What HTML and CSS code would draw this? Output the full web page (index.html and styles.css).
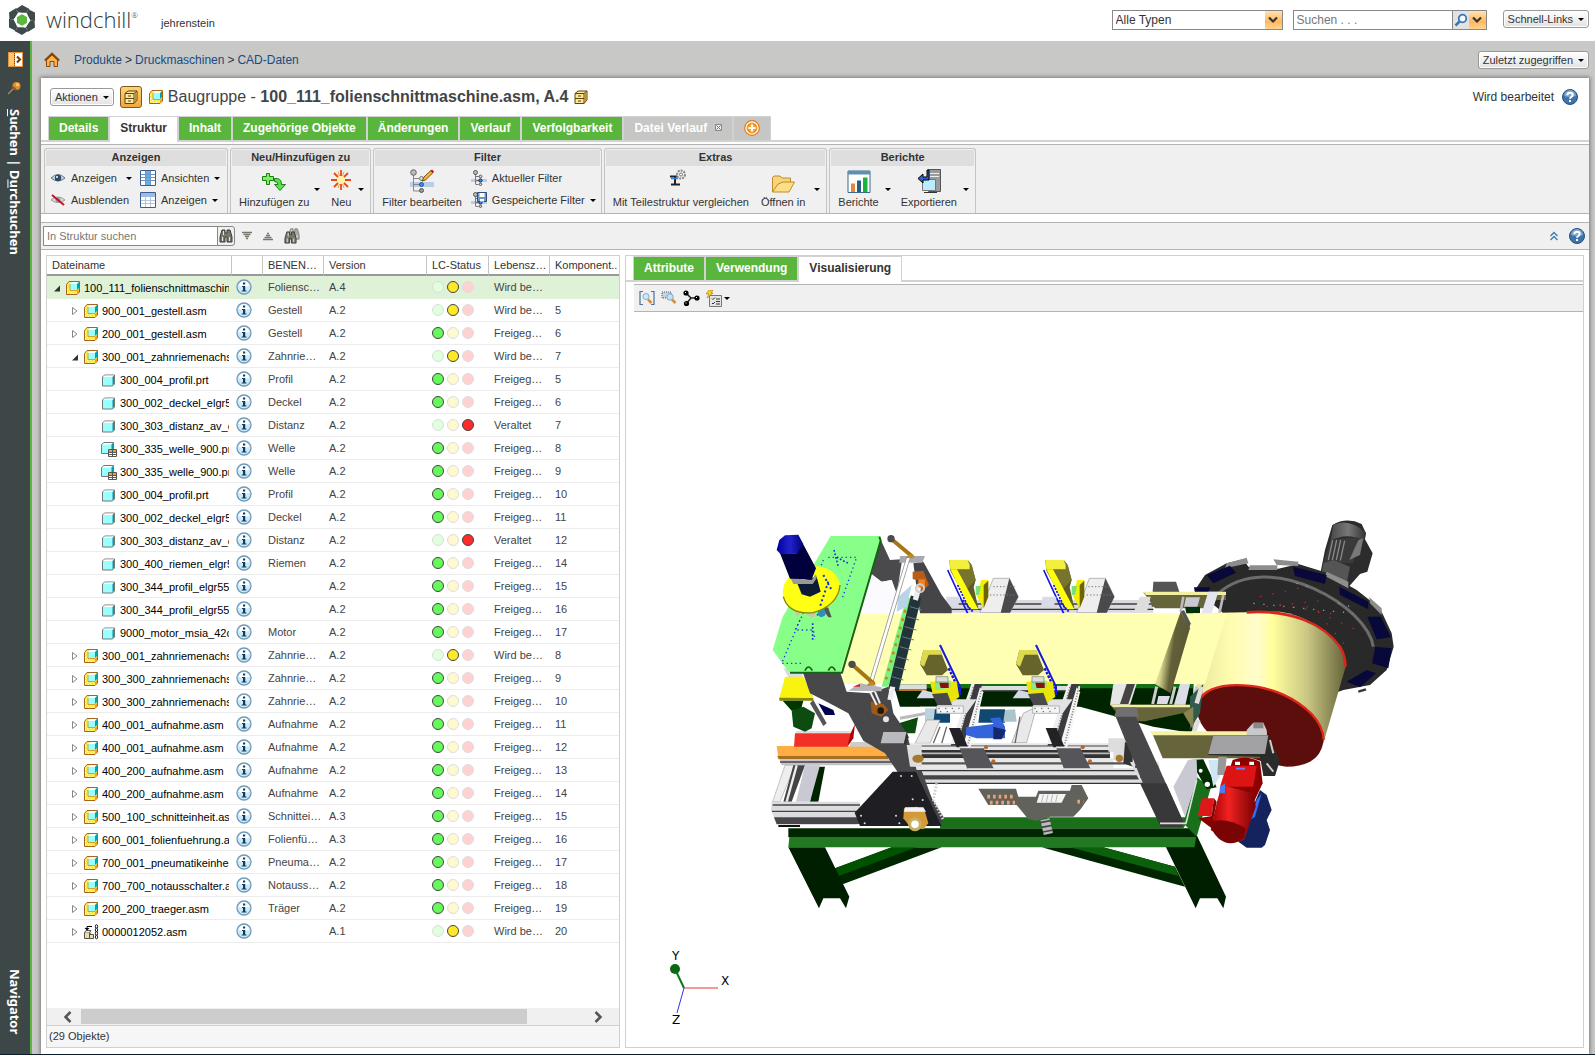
FILE: index.html
```html
<!DOCTYPE html>
<html lang="de">
<head>
    <meta charset="UTF-8">
    <title>Windchill</title>
    <link rel="stylesheet" href="styles.css">
</head>
<body>
<!-- icons -->
<svg class="sprite" aria-hidden="true">
    <symbol id="i-asm" viewBox="0 0 16 16">
        <path d="M1.500 4.500 4 1.500h10.500v10.500l-2.500 2.500H1.500z" fill="#ffe94d" stroke="#a8641c"/>
        <path d="M2 6h1v1H2zM2 9h1v1H2zM2 12h1v1H2zM5 13h1v1H5zM8 13h1v1H8zM4 11h1v1H4z" fill="#fff"/>
        <path d="M12 14v-3l2-2v3z" fill="#f0a01e"/>
        <path d="M5 4 7 2h7l-2 2z" fill="#fff"/>
        <path d="M5 4h7v6H5z" fill="#9ff"/>
        <path d="M12 4l2-2v6l-2 2z" fill="#00a5b5"/>
        <path d="M5 4v6.500h7" fill="none" stroke="#b98a1a" stroke-width=".7"/>
    </symbol>
    <symbol id="i-prt" viewBox="0 0 16 16">
        <path d="M1.500 5 3.500 3h10v9l-2 2h-10z" fill="#9ff" stroke="#777"/>
        <path d="M2 5 4 3.500H13L11.500 5z" fill="#fff"/>
        <path d="M11.500 5 13 3.500V12l-1.500 1.500z" fill="#009aa8"/>
    </symbol>
    <symbol id="i-fam" viewBox="0 0 16 16">
        <path d="M.5 3.500 3 1.500h9.500v9l-2 2H.5z" fill="#9ff" stroke="#777"/>
        <path d="M1 3.500 3.500 2H12l-1.500 1.500z" fill="#fff"/>
        <path d="M10.500 3.500 12 2v7l-1.500 2z" fill="#009aa8"/>
        <path d="M7.500 8.500h8v7h-8z" fill="#fff" stroke="#555"/>
        <path d="M8 9h7v2H8z" fill="#f5a020"/>
        <path d="M8 11.500h7M8 13.500h7M11.500 9v6" stroke="#555" fill="none"/>
    </symbol>
    <symbol id="i-bulk" viewBox="0 0 16 16">
        <path d="M1.500 8.500h5v6h-5zM6.500 10.500h4v4h-4z" fill="#e9dfa0" stroke="#555"/>
        <path d="M1.500 8.500 3 6.500h5l-1.500 2M6.500 10.500 8 8.500" fill="#fff8cc" stroke="#555"/>
        <path d="M4 5V2.500h5" fill="none" stroke="#000"/>
        <path d="M1.500 4h5L4 6.500z" fill="#000"/>
        <g fill="#fff" stroke="#000" stroke-width=".9"><ellipse cx="13.500" cy="2.500" rx="1.200" ry="1.800"/><ellipse cx="13.500" cy="6" rx="1.200" ry="1.800"/><ellipse cx="13.500" cy="9.500" rx="1.200" ry="1.800"/><ellipse cx="13.500" cy="13" rx="1.200" ry="1.800"/></g>
    </symbol>
    <symbol id="i-info" viewBox="0 0 16 16">
        <circle cx="8" cy="8" r="7" fill="#cdeaf8" stroke="#6f9ab8" stroke-width="1.300"/>
        <path d="M3 7a5 5 0 0 1 10 0q-5 1-10 0z" fill="#fff"/>
        <path d="M7 3.500h2.200v2H7zM6 7h3.200v4.500H10.500v1H5.700v-1H7V8H6z" fill="#123c5c"/>
    </symbol>
    <symbol id="i-help" viewBox="0 0 16 16">
        <circle cx="8" cy="8" r="7.500" fill="#3f74a8" stroke="#27507c"/>
        <path d="M2 7a6 6 0 0 1 12 0q-6 2-12 0z" fill="#7ba6cd"/>
        <path d="M5.300 6.200C5.300 2.800 10.700 3 10.700 6 10.700 8 8 8 8 9.700M8 11v2" fill="none" stroke="#fff" stroke-width="2"/>
    </symbol>
    <symbol id="i-cabinet" viewBox="0 0 14 14">
        <path d="M1 3.500 4 1h9v9l-3 3.500H1z" fill="#fbe69a" stroke="#5d4510"/>
        <path d="M1 3.500h9v10M10 3.500 13 1" fill="none" stroke="#5d4510"/>
        <path d="M10.500 4 12.500 2v8l-2 2.500z" fill="#c48b2e"/>
        <path d="M1 8.500h9M4 6h3M4 11h3" stroke="#5d4510" fill="none"/>
    </symbol>
    <symbol id="i-bino" viewBox="0 0 14 14">
        <path d="M3 1h3v3h2V1h3l2 7v5H8V8H6v5H1V8z" fill="#77796f" stroke="#3a3b34"/>
        <path d="M3 8h1v4H3zM10 8h1v4h-1zM4 2h1v4H4z" fill="#e6e8dc"/>
    </symbol>
    <symbol id="i-tree" viewBox="0 0 16 16">
        <path d="M0 9h16v3H0z" fill="#b9cde6"/>
        <path d="M4.500 4v10M4.500 6.500h4M4.500 10.500h4M4.500 14.500h3" stroke="#777" fill="none"/>
        <circle cx="4.500" cy="2.500" r="2" fill="#bbb" stroke="#555"/>
        <circle cx="9.500" cy="6.500" r="1.400" fill="#ddd" stroke="#555"/>
        <circle cx="9.500" cy="10.500" r="1.600" fill="#3b8bff" stroke="#124"/>
        <circle cx="9.500" cy="14.300" r="1.200" fill="#ddd" stroke="#555"/>
    </symbol>
    <symbol id="i-chev" viewBox="0 0 10 8">
        <path d="M1 1.500 5 5.500 9 1.500" fill="none" stroke="#333" stroke-width="2.200"/>
    </symbol>
    <symbol id="i-yellowmotor" viewBox="0 0 130 170" overflow="visible">
        <path d="M0 30 60 160" stroke="#1616e0" stroke-width="5" fill="none"/>
        <path d="M5 0H60L72 15 84 60 78 82 92 145H70L8 32z" fill="#5f5c24"/>
        <path d="M60 0 72 15 84 60 55 90 28 28H66z" fill="#77742e"/>
        <path d="M5 0H60L66 14V28H8z" fill="#f3ef3c"/>
        <path d="M8 28H28L92 148H66z" fill="#ffff10"/>
        <path d="M100 60H122V72L108 145 88 110z" fill="#f4f000"/>
        <path d="M108 75 122 62V110L108 145z" fill="#6a6600"/>
        <path d="M84 78H100L94 105H84z" fill="#7be07b"/>
        <path d="M30 75 66 150M45 120 75 155" stroke="#1616e0" stroke-width="5" stroke-dasharray="6 4" fill="none"/>
    </symbol>
    <symbol id="i-lowmotor" viewBox="0 0 130 200" overflow="visible">
        <path d="M8 120 -10 145H50V130z" fill="#d5d8e4"/>
        <path d="M50 168 75 148H170L140 190H50z" fill="#e2e2e2"/>
        <path d="M50 168H130V190H50z" fill="#f4f4f4" stroke="#999" stroke-width="2"/>
        <path d="M55 175H125M60 185H120" stroke="#555" stroke-width="3" stroke-dasharray="4 16"/>
        <path d="M60-15 120 110V135" fill="none" stroke="#1616e0" stroke-width="6"/>
        <path d="M86 55 116 118 100 140" fill="none" stroke="#1616e0" stroke-width="7" stroke-dasharray="8 4"/>
        <path d="M10 0H60L84 60 66 76H20L0 42z" fill="#66642a"/>
        <path d="M10 0H60L66 14H26L12 50 0 42z" fill="#dcd94e"/>
        <path d="M30 95H110L118 140 85 165 40 140z" fill="#e9e50a"/>
        <path d="M36 132 82 128 96 165H52z" fill="#4a4a4e"/>
        <path d="M45 92H92V112L60 120H45z" fill="#8be88b"/>
        <path d="M58 98H86V114H62z" fill="#8c1010"/>
        <path d="M48 80H84V96H48z" fill="#ddd" stroke="#777" stroke-width="2"/>
    </symbol>
    <symbol id="i-carriage" viewBox="0 0 150 230" overflow="visible">
        <path d="M70 0H95L40 185H0z" fill="#3c3c40"/>
        <path d="M62 0H72L20 180H0z" fill="#eee"/>
        <path d="M88 10 98 25 60 190H36z" fill="#f5f5f5"/>
        <path d="M92 20 50 190M68 10 18 180" stroke="#777" stroke-width="5" stroke-dasharray="3 5" fill="none"/>
        <path d="M-5 132H28L52 190H18z" fill="#222226"/>
        <path d="M26 190H98L130 255H50z" fill="#56565a"/>
        <path d="M26 190H100M50 255H130" stroke="#e6e6e6" stroke-width="5"/>
        <circle cx="106" cy="190" r="6" fill="#b8682a"/>
        <circle cx="128" cy="232" r="6" fill="#b8682a"/>
    </symbol>
</svg>

<header class="top">
    <svg class="logo" viewBox="0 0 26 30" aria-hidden="true">
        <g fill="#3f4b4b">
            <path id="blade" d="M13 0 20.500 4 18.500 7.800H8.500L6.800 4.200z"/>
            <use href="#blade" transform="rotate(60 13 15)"/>
            <use href="#blade" transform="rotate(120 13 15)"/>
            <use href="#blade" transform="rotate(180 13 15)"/>
            <use href="#blade" transform="rotate(240 13 15)"/>
            <use href="#blade" transform="rotate(300 13 15)"/>
        </g>
        <g fill="#fff">
            <path id="slit" d="M6 3.500 10.500 9 13.500 8.300 9.500 7.300z"/>
            <use href="#slit" transform="rotate(60 13 15)"/>
            <use href="#slit" transform="rotate(120 13 15)"/>
            <use href="#slit" transform="rotate(180 13 15)"/>
            <use href="#slit" transform="rotate(240 13 15)"/>
            <use href="#slit" transform="rotate(300 13 15)"/>
        </g>
        <path d="M13 8.500 18.600 11.800V18.200L13 21.500 7.400 18.200V11.800z" fill="#5ab93c" stroke="#fff" stroke-width="1.200"/>
    </svg>
    <span class="brand">windchill<sup>®</sup></span>
    <span class="user">jehrenstein</span>
    <div class="top-tools">
        <div class="combo combo-type">
            <select aria-label="Typ"><option>Alle Typen</option></select>
            <span class="trigger"><svg width="10" height="8"><use href="#i-chev"/></svg></span>
        </div>
        <div class="combo combo-search">
            <input type="text" placeholder="Suchen . . ." aria-label="Suchen">
            <button class="mag" aria-label="Suchen"><svg width="14" height="14" viewBox="0 0 14 14"><path d="M1.500 12.500 6 8" stroke="#3b74b5" stroke-width="2.500"/><circle cx="8.500" cy="5.500" r="3.800" fill="#f5faff" stroke="#3b74b5" stroke-width="1.800"/></svg></button>
            <button class="trigger" aria-label="Suchoptionen"><svg width="10" height="8"><use href="#i-chev"/></svg></button>
        </div>
        <button class="btn">Schnell-Links<i class="caret"></i></button>
    </div>
</header>

<div class="frame">
    <nav class="rail">
        <button class="rail-btn" aria-label="Navigator öffnen"><svg width="15" height="15" viewBox="0 0 15 15"><path d="M0 0h15v15H0z" fill="#e8943a"/><path d="M1 1h5v13H1z" fill="#ffc878"/><path d="M7 1h7v13H7z" fill="#fff"/><path d="M6.500 1v13" stroke="#7a3c00" stroke-dasharray="1 1"/><path d="M9 4.500 12 7.500 9 10.500" fill="none" stroke="#6b3a10" stroke-width="2"/></svg></button>
        <button class="rail-btn" aria-label="Anheften"><svg width="14" height="14" viewBox="0 0 14 14"><path d="M0 13 6 7" stroke="#b98d63" stroke-width="1.200"/><circle cx="8.500" cy="5" r="4" fill="#e08a28"/><path d="M5 6 8 9" stroke="#a25612" stroke-width="2"/><circle cx="9.500" cy="3.800" r="1.800" fill="#ffc56a"/></svg></button>
        <a class="rail-link" href="#"><u>S</u>uchen | D<u>u</u>rchsuchen</a>
        <a class="rail-link rail-end" href="#">Navigator</a>
    </nav>

    <main class="main">
        <div class="crumbs">
            <svg class="home" width="16" height="16" viewBox="0 0 16 16"><path d="M2.500 8v6.500H6V9.500h4v5h3.500V8L8 3z" fill="#ffb04f" stroke="#8a4508"/><path d="M.8 8.500 8 1.500 15.200 8.500" fill="none" stroke="#8a4508" stroke-width="1.800"/></svg>
            <a href="#">Produkte</a> &gt; <a href="#">Druckmaschinen</a> &gt; <a href="#">CAD-Daten</a>
            <button class="btn push">Zuletzt zugegriffen<i class="caret"></i></button>
        </div>

        <section class="card">
            <div class="title">
                <button class="btn">Aktionen<i class="caret"></i></button>
                <button class="btn-cab" aria-label="Ablage"><svg width="14" height="14"><use href="#i-cabinet"/></svg></button>
                <svg class="title-ico" width="16" height="16"><use href="#i-asm"/></svg>
                <h1>Baugruppe - <b>100_111_folienschnittmaschine.asm, A.4</b></h1>
                <svg width="14" height="14"><use href="#i-cabinet"/></svg>
                <span class="state push">Wird bearbeitet</span>
                <svg width="16" height="16"><use href="#i-help"/></svg>
            </div>

            <div class="tabbar">
                <ul class="tabs">
                    <li><a href="#">Details</a></li>
                    <li class="on"><a href="#">Struktur</a></li>
                    <li><a href="#">Inhalt</a></li>
                    <li><a href="#">Zugehörige Objekte</a></li>
                    <li><a href="#">Änderungen</a></li>
                    <li><a href="#">Verlauf</a></li>
                    <li><a href="#">Verfolgbarkeit</a></li>
                    <li class="off"><a href="#">Datei Verlauf<svg width="7" height="7" viewBox="0 0 7 7"><path d="M.5.5h6v6h-6z" fill="#eee" stroke="#888"/><path d="M1.500 1.500 5.500 5.500M5.500 1.500 1.500 5.500" stroke="#777"/></svg></a></li>
                    <li class="off"><a href="#" aria-label="Neue Registerkarte"><svg class="plus" width="16" height="16" viewBox="0 0 16 16"><circle cx="8" cy="8" r="7.300" fill="#fff" stroke="#e07b10" stroke-width="1.200"/><circle cx="8" cy="8" r="5.500" fill="#f59a28"/><path d="M8 4.500v7M4.500 8h7" stroke="#fff" stroke-width="2.200"/></svg></a></li>
                </ul>
            </div>

            <div class="ribbon">
                <div class="group">
                    <h2>Anzeigen</h2>
                    <div class="rg rg-view">
                        <button class="small"><svg width="16" height="16" viewBox="0 0 16 16"><path d="M1 8q7-7 14 0-7 6-14 0z" fill="#c9d6e2" stroke="#5e7386"/><circle cx="8" cy="8" r="3.200" fill="#2f4c66"/><circle cx="7" cy="7" r="1" fill="#fff"/></svg>Anzeigen<i class="caret far"></i></button>
                        <button class="small"><svg width="16" height="16" viewBox="0 0 16 16"><path d="M.5.5h15v15H.5z" fill="#fff" stroke="#3a5f8f"/><path d="M5 1h5v14H5z" fill="#5cb3e6"/><path d="M1 4.500h14M1 7.500h14M1 10.500h14M5.500 1v14M10.500 1v14" stroke="#6f93c4"/></svg>Ansichten<i class="caret"></i></button>
                        <button class="small"><svg width="16" height="16" viewBox="0 0 16 16"><path d="M1 8q7-6 14 0-7 5-14 0z" fill="#ddd" stroke="#999"/><circle cx="8" cy="8" r="2.500" fill="#999"/><path d="M2 3 14 13" stroke="#c8102a" stroke-width="2"/></svg>Ausblenden</button>
                        <button class="small"><svg width="16" height="16" viewBox="0 0 16 16"><path d="M.5.5h15v15H.5z" fill="#fff" stroke="#3a5f8f"/><path d="M1 1h14v4H1z" fill="#9dbbe8"/><path d="M1 8.500h14M1 11.500h14M5.500 5v10M10.500 5v10" stroke="#b9c6da"/></svg>Anzeigen<i class="caret"></i></button>
                    </div>
                </div>
                <div class="group">
                    <h2>Neu/Hinzufügen zu</h2>
                    <div class="rg rg-add">
                        <button class="big"><svg width="24" height="24" viewBox="0 0 24 24"><path d="M4.500 4.500h3v3h4v4h-4v4h-3v-4h-4v-4h4z" fill="#7df05a" stroke="#1a7d1a"/><path d="M12.500 9.500q7-1 7 6h4l-5.500 6-5.500-6h3.500q0-3-3.500-3z" fill="#5de04a" stroke="#1a7d1a"/></svg>Hinzufügen zu</button><i class="caret"></i>
                        <button class="big"><svg width="24" height="24" viewBox="0 0 24 24"><circle cx="12" cy="11" r="5" fill="#fff2a8"/><path d="M12 7V1M12 15v6M8 11H2M16 11h6M9 8 5 4M15 14l4 4M15 8l4-4M9 14l-4 4" stroke="#e84a16" stroke-width="1.800"/><path d="M10.500 7 9 2.500M13.500 7 15 2.500M10.500 15 9 19M13.500 15 15 19" stroke="#f5a04a"/></svg>Neu</button><i class="caret"></i>
                    </div>
                </div>
                <div class="group">
                    <h2>Filter</h2>
                    <div class="rg rg-filter">
                        <button class="big"><svg width="24" height="24" viewBox="0 0 24 24"><path d="M0 13h24v5H0z" fill="#b9cde6"/><path d="M3.500 5v17H10M4 9.500h6M4 15.500h6" stroke="#888" fill="none"/><circle cx="3.500" cy="3.500" r="2.800" fill="#bbb" stroke="#666"/><circle cx="11.500" cy="9.500" r="2" fill="#ddd" stroke="#777"/><circle cx="11.500" cy="15.500" r="2" fill="#3b8bff" stroke="#258"/><circle cx="11.500" cy="21.500" r="2" fill="#999" stroke="#555"/><path d="M12 12 14 8 21 1.500 23 3.500 15.500 11z" fill="#f7b93c" stroke="#70450e"/><path d="M20.500 2 22 .5 24 2.500 22.500 4z" fill="#b81818"/></svg>Filter bearbeiten</button>
                        <div class="stack">
                            <button class="small"><svg width="16" height="16"><use href="#i-tree"/></svg>Aktueller Filter</button>
                            <button class="small"><svg width="16" height="16" viewBox="0 0 16 16"><use href="#i-tree" width="16" height="16"/><path d="M6.500.5h9v9h-9z" fill="#6d94c9" stroke="#2d4d7d"/><path d="M8.500 1h5v4h-5zM9 7h4v2.500H9z" fill="#fff"/></svg>Gespeicherte Filter<i class="caret"></i></button>
                        </div>
                    </div>
                </div>
                <div class="group">
                    <h2>Extras</h2>
                    <div class="rg rg-extra">
                        <button class="big"><svg width="24" height="24" viewBox="0 0 24 24"><path d="M1 7.500h9M6 8v7M2 15.500h9" stroke="#222" stroke-width="2"/><path d="M2 9.500h7" stroke="#2f86d8" stroke-width="1.500"/><circle cx="12" cy="5.500" r="4" fill="#eee" stroke="#888" stroke-width="2" stroke-dasharray="2 1"/><circle cx="12" cy="5.500" r="1.500" fill="#fff" stroke="#777"/></svg>Mit Teilestruktur vergleichen</button>
                        <button class="big"><svg width="24" height="24" viewBox="0 0 24 24"><path d="M1.500 23V8.500L3 7h6l2 2h8.500v4" fill="#f7d57a" stroke="#c08a2a"/><path d="M1.500 23 7 15l5-2h11.500L18 23z" fill="#ffdf86" stroke="#c08a2a"/></svg>Öffnen in</button><i class="caret"></i>
                    </div>
                </div>
                <div class="group">
                    <h2>Berichte</h2>
                    <div class="rg rg-report">
                        <button class="big"><svg width="24" height="24" viewBox="0 0 24 24"><path d="M1 2h22v21.500H1z" fill="#fff" stroke="#3d6a8c"/><path d="M1 2h22v3.500H1z" fill="#5f8fb3"/><path d="M4 14.500h4V23H4z" fill="#e8873a"/><path d="M10 11.500h4V23h-4z" fill="#2a5f85"/><path d="M16 8.500h4.500V23H16z" fill="#18b53a"/></svg>Berichte</button><i class="caret"></i>
                        <button class="big"><svg width="24" height="24" viewBox="0 0 24 24"><path d="M11.500.5h12v22h-12z" fill="#9a9a9a" stroke="#555"/><path d="M13 4.500h9M13 7.500h9" stroke="#eee"/><path d="M5.500 10.500h13v11h-13z" fill="#b8ecff" stroke="#777"/><path d="M7 23.500h13" stroke="#333"/><path d="M1 9.500 6 5v3h4V1h2v10H6v3z" fill="#2d62c8" stroke="#000"/></svg>Exportieren</button><i class="caret"></i>
                    </div>
                </div>
            </div>

            <div class="findbar">
                <div class="find">
                    <input type="text" placeholder="In Struktur suchen" aria-label="In Struktur suchen">
                    <button aria-label="Suchen"><svg width="14" height="14"><use href="#i-bino"/></svg></button>
                </div>
                <svg width="10" height="10" viewBox="0 0 10 10"><path d="M0 1.500h10M1.500 3.500h7M3 5.500h4M4 7.500h2" stroke="#77796f" stroke-width="1.600"/></svg>
                <svg width="10" height="10" viewBox="0 0 10 10"><path d="M4 2.500h2M3 4.500h4M1.500 6.500h7M0 8.500h10" stroke="#77796f" stroke-width="1.600"/></svg>
                <svg width="16" height="16" viewBox="0 0 16 16"><use href="#i-bino" x="4" y="0" width="12" height="12" opacity=".6"/><use href="#i-bino" x="0" y="3" width="13" height="13"/></svg>
                <svg class="push" width="8" height="10" viewBox="0 0 8 10"><path d="M.5 5 4 1.500 7.500 5M.5 9 4 5.500 7.500 9" fill="none" stroke="#3f7cb4" stroke-width="1.400"/></svg>
                <svg width="16" height="16"><use href="#i-help"/></svg>
            </div>

            <div class="split">
                <div class="pane">
                    <div class="grid">
                        <table>
                            <colgroup>
                                <col class="c-name"><col class="c-info"><col class="c-ben"><col class="c-ver"><col class="c-lc"><col class="c-life"><col>
                            </colgroup>
                            <thead>
                            <tr><th>Dateiname</th><th></th><th>BENEN…</th><th>Version</th><th>LC-Status</th><th>Lebensz…</th><th>Komponent..</th></tr>
                            </thead>
                            <tbody id="rows"></tbody>
                        </table>
                    </div>
                    <div class="hscroll">
                        <svg width="9" height="12" viewBox="0 0 9 12"><path d="M7.500 1 2.500 6 7.500 11" fill="none" stroke="#555" stroke-width="2.500"/></svg>
                        <div class="track"><div class="thumb"></div></div>
                        <svg width="9" height="12" viewBox="0 0 9 12"><path d="M1.500 1 6.500 6 1.500 11" fill="none" stroke="#555" stroke-width="2.500"/></svg>
                    </div>
                    <div class="count">(29 Objekte)</div>
                </div>

                <div class="pane">
                    <div class="tabbar inner">
                        <ul class="tabs">
                            <li><a href="#">Attribute</a></li>
                            <li><a href="#">Verwendung</a></li>
                            <li class="on"><a href="#">Visualisierung</a></li>
                        </ul>
                    </div>
                    <div class="viewer">
                        <div class="viewbar">
                            <button aria-label="Alles zoomen"><svg width="16" height="16" viewBox="0 0 16 16"><path d="M4 1.500H1v13h3M12 1.500h3v13h-3" fill="none" stroke="#4d7196" stroke-width="1.200"/><path d="M9 9.500 12.500 13" stroke="#e08a28" stroke-width="2.500"/><circle cx="7" cy="6.500" r="3" fill="#c8ecff" stroke="#8ab"/></svg></button>
                            <button aria-label="Fenster zoomen"><svg width="16" height="16" viewBox="0 0 16 16"><path d="M1 2h9v6H1z" fill="#c7d2de" stroke="#46586c" stroke-dasharray="1 1"/><path d="M11 9.500 14.500 13" stroke="#e08a28" stroke-width="2.500"/><circle cx="9" cy="7" r="3.200" fill="#b8e6ff" stroke="#8ab"/></svg></button>
                            <button aria-label="Explodieren"><svg width="17" height="17" viewBox="0 0 17 17"><path d="M3 3 8 8 3 14M8 8h6" fill="none" stroke="#222" stroke-width="1.500"/><circle cx="3" cy="3" r="2.600"/><circle cx="3.500" cy="13.500" r="2.600"/><circle cx="14" cy="8" r="2.600"/><path d="M2 2h1v1H2zM2.500 12.500h1v1h-1zM13 7h1v1h-1z" fill="#fff"/></svg></button>
                            <button aria-label="Aktionen"><svg width="16" height="17" viewBox="0 0 16 17"><path d="M3.500 5.500h12v11h-12z" fill="#e6e6e6" stroke="#777"/><path d="M6 8.500l1 1 2-2M6 13l1 1 2-2M10 9h4M10 11.500h4M10 14h4" fill="none" stroke="#333"/><path d="M3 0h4L5 3h2L1 8l2-4H0z" fill="#ffd21e" stroke="#a87400" stroke-width=".6"/></svg><i class="caret"></i></button>
                        </div>
                        <svg class="model" viewBox="0 -1 949 735" preserveAspectRatio="xMidYMid meet" role="img" aria-label="3D-Modell">
                            <defs>
                                <linearGradient id="roll" x1="0" x2="1">
                                    <stop offset="0" stop-color="#e8e59a"/><stop offset=".25" stop-color="#fffdb0"/><stop offset=".42" stop-color="#fffccd"/><stop offset=".52" stop-color="#ffff9c"/><stop offset=".75" stop-color="#c9c684"/><stop offset="1" stop-color="#66643a"/>
                                </linearGradient>
                                <linearGradient id="guide" x1="0" x2="1" y2=".3">
                                    <stop offset="0" stop-color="#ffffb3"/><stop offset=".35" stop-color="#d6d48e"/><stop offset=".6" stop-color="#626038"/><stop offset="1" stop-color="#5a5834"/>
                                </linearGradient>
                                <linearGradient id="redm" x1="0" x2="1">
                                    <stop offset="0" stop-color="#a00000"/><stop offset=".4" stop-color="#f02222"/><stop offset="1" stop-color="#780000"/>
                                </linearGradient>
                                <linearGradient id="graym" x1="0" x2="1">
                                    <stop offset="0" stop-color="#4a4a4a"/><stop offset=".5" stop-color="#777"/><stop offset="1" stop-color="#333"/>
                                </linearGradient>
                                <linearGradient id="bluem" x1="0" x2="1">
                                    <stop offset="0" stop-color="#0000a0"/><stop offset=".5" stop-color="#2222cc"/><stop offset="1" stop-color="#000078"/>
                                </linearGradient>
                            </defs>
                            <g transform="translate(126 187) scale(.33333)">
                                <!-- base frame -->
                                <path d="M400 552H1300V700L1180 680 960 620H420z" fill="#002400"/>
                                <path d="M400 552H1300V565H400z" fill="#147014"/>
                                <path d="M350 690 480 650V700H300z" fill="#0d4a0d"/>
                                <path d="M170 800H195L175 905H150z" fill="#002400"/>
                                <path d="M225 1105 395 1042H545L250 1152 215 1135z" fill="#002600"/>
                                <path d="M225 1105 395 1042H470L222 1133z" fill="#005200"/>
                                <path d="M845 1042H1030L1245 1100 1275 1160 990 1082z" fill="#002600"/>
                                <path d="M930 1042H1030L1245 1100 1255 1128z" fill="#0b600b"/>
                                <path d="M85 1042H195L268 1190 258 1225 240 1195H190L177 1225z" fill="#001e00"/>
                                <path d="M1218 1042 1310 1005 1398 1190 1390 1225 1372 1195H1320L1307 1225z" fill="#001e00"/>
                                <path d="M85 985H1310V1012H85z" fill="#002800"/>
                                <path d="M540 952H1290L1270 985H540z" fill="#187018"/>
                                <path d="M88 1011H1308L1304 1042H85z" fill="#217a21"/>
                                <path d="M1270 970 1310 830 1352 865 1310 1010z" fill="#1a701a"/>
                                <path d="M1290 780 1330 778 1370 862 1340 868z" fill="#002c00"/>
                                <circle cx="1322" cy="812" r="6" fill="#fff"/><circle cx="1342" cy="853" r="8" fill="#fff"/>

                                <!-- disc with drive -->
                                <path d="M1717 75Q1760 50 1805 72L1818 100 1815 118 1838 160 1822 215 1800 222 1765 262 1680 225 1695 150z" fill="#2c2c2c"/>
                                <path d="M1720 75Q1765 52 1818 98L1812 122Q1760 95 1712 122z" fill="url(#graym)"/>
                                <path d="M1712 118 1795 112 1780 190 1690 190z" fill="#3a3a3a"/>
                                <path d="M1718 120 1705 180M1730 120 1717 180M1742 120 1729 180M1754 122 1741 182" stroke="#888" stroke-width="4"/>
                                <path d="M1795 120 1810 115 1800 165 1768 180z" fill="#787878"/>
                                <path d="M1690 190 1720 180 1770 200 1760 250 1685 220z" fill="#555"/>
                                <path d="M1305 270 1335 225 1400 190 1450 178 1465 200 1555 206 1615 192 1700 218 1790 270 1860 325 1895 400 1901 440 1880 510 1830 555 1750 570 1640 610 1380 330z" fill="#292929"/>
                                <path d="M1400 190 1460 173 1465 190 1395 205zM1540 178 1615 185V198L1550 195zM1470 196H1552V210H1465zM1700 215 1765 245V265L1695 228zM1828 292 1865 325V345L1830 310z" fill="#8d8d8d"/>
                                <path d="M1375 280C1450 215 1560 220 1660 265S1830 380 1840 440" fill="none" stroke="#6c6c6c" stroke-width="9"/>
                                <g fill="#08083a">
                                    <path d="M1340 225 1410 197 1428 218 1360 250z"/><path d="M1302 262H1350L1345 280H1305z"/>
                                    <path d="M1598 200 1700 225 1695 252 1605 228z"/><path d="M1738 260 1825 305V328L1740 285z"/>
                                    <path d="M1822 350H1862L1893 412 1850 418z"/><path d="M1846 440 1895 445 1885 505 1836 490z"/>
                                    <path d="M1760 545 1820 510 1848 520 1800 562z"/>
                                </g>
                                <path d="M1500 290 1640 260M1520 320 1700 300M1560 315 1740 345M1640 320 1800 395M1700 370 1760 440" stroke="#c22" stroke-width="4" stroke-dasharray="4 34"/>
                                <path d="M1480 310 1780 340M1610 250 1650 262M1735 310 1790 325" stroke="#99a" stroke-width="4" stroke-dasharray="4 26"/>
                                <path d="M1795 575 1818 568" stroke="#334" stroke-width="7"/>

                                <!-- back rail -->
                                <path d="M560 300H1180V338H540z" fill="#d9d9de"/>
                                <path d="M560 312H1180" stroke="#666" stroke-width="6"/>
                                <path d="M560 328H1180" stroke="#333" stroke-width="4"/>
                                <path d="M700 235H748L775 290 750 338H660z" fill="#eee" stroke="#999" stroke-width="2"/>
                                <path d="M748 235 775 290 750 338H722z" fill="#4a4a4e"/>
                                <path d="M988 235H1036L1063 290 1040 338H950z" fill="#eee" stroke="#999" stroke-width="2"/>
                                <path d="M1036 235 1063 290 1040 338H1010z" fill="#4a4a4e"/>
                                <path d="M700 260H765M690 285H770M985 260H1050M980 285H1058" stroke="#777" stroke-width="3" stroke-dasharray="4 6"/>
                                <path d="M1180 245H1248L1258 275V320H1175z" fill="#555"/>
                                <path d="M1150 277H1398V300H1370L1330 325H1185z" fill="#66643a"/>
                                <path d="M1150 275H1398V285H1158z" fill="#f2efa0"/>
                                <path d="M1140 290H1172L1160 338H1120z" fill="#ddd"/>
                                <path d="M1275 320H1320V420L1290 400z" fill="#00300a"/>
                                <path d="M1278 292H1320L1312 320H1272z" fill="#c9c9d6"/>
                                <path d="M1345 275H1375L1355 340H1325z" fill="#e4e4ee"/>
                                <path d="M1390 285 1378 340M1270 290 1262 336" stroke="#bbb" stroke-width="8"/>
                                <use href="#i-yellowmotor" x="563" y="180" width="130" height="170"/>
                                <use href="#i-yellowmotor" x="851" y="180" width="130" height="170"/>
                                <path d="M560 290H600L595 318H555zM848 290H890L882 318H843z" fill="#d9dce8"/>

                                <!-- roll and foil -->
                                <path d="M1300 340 1560 335Q1660 350 1730 430 1757 465 1757 500L1690 730 1312 640z" fill="url(#roll)"/>
                                <path d="M1460 337C1590 328 1690 370 1740 440Q1757 470 1756 500" fill="none" stroke="#d8261c" stroke-width="8"/>
                                <path d="M1312 640C1310 575 1370 555 1450 555 1540 558 1610 595 1655 640 1695 685 1695 715 1685 745 1670 785 1630 800 1580 800 1520 795 1330 740 1312 640z" fill="#5c0e0c"/>
                                <path d="M1314 605C1335 565 1390 553 1450 556 1540 560 1610 598 1655 642Q1690 680 1691 720" fill="none" stroke="#e3261c" stroke-width="7"/>
                                <path d="M262 340H1305L1240 552H245z" fill="#ffffb3"/>
                                <path d="M1300 340H1400L1335 552H1238z" fill="#ffffb3"/>
                                <path d="M1262 335 1290 385 1240 555 1232 580 1185 552z" fill="url(#guide)"/>
                                <path d="M1262 335 1288 385 1292 370 1272 330z" fill="#555"/>

                                <!-- right support -->
                                <path d="M1060 552H1130L1110 615H1050z" fill="#e6e6e6"/>
                                <path d="M1100 552H1125L1105 612H1080z" fill="#444"/>
                                <path d="M1190 560 1178 612M1245 560 1232 612M1310 560 1298 612" stroke="#ccc" stroke-width="9"/>
                                <path d="M1260 552H1290L1275 620H1240zM1195 588H1230L1222 612H1190z" fill="#dcdce8"/>
                                <path d="M1050 614H1290L1302 632 1155 664H1090z" fill="#66643a"/>
                                <path d="M1050 614H1290L1300 622H1060z" fill="#f2efa0"/>
                                <path d="M1290 590 1330 552 1320 640 1290 690z" fill="#2f5c4c"/>
                                <path d="M1270 640 1300 620V690z" fill="#8a8450"/>
                                <path d="M1310 610 1325 560M1300 700 1315 660" stroke="#ddd" stroke-width="14"/>

                                <!-- cross rails -->
                                <path d="M415 560H500M650 565H960" stroke="#ddd" stroke-width="14"/>
                                <path d="M650 573H960" stroke="#333" stroke-width="5"/>
                                <path d="M415 570H500" stroke="#e08a30" stroke-width="5"/>
                                <path d="M480 620H850V730H460z" fill="#fff"/>
                                <path d="M420 655 500 640H560" stroke="#bbb" stroke-width="9" fill="none"/>
                                <path d="M495 625H570V665H495z" fill="#b9d4dc"/><path d="M525 628H570V668H520z" fill="#0f4870"/>
                                <path d="M660 628H735V668H655z" fill="#0f4870"/><path d="M735 630 765 628 770 665H730z" fill="#a9c4cc"/>
                                <path d="M500 660 540 660 510 730H465zM790 640 830 620 800 728H755z" fill="#e9e9e9" stroke="#999" stroke-width="2"/>
                                <path d="M540 680 520 730M560 680 545 730M780 650 765 730" stroke="#666" stroke-width="4"/>
                                <path d="M440 730H1050V750H440z" fill="#e6e6e8"/><path d="M440 750H1050V775H440z" fill="#333"/>
                                <path d="M440 738H1050" stroke="#777" stroke-width="4"/>
                                <path d="M440 760H1050" stroke="#bbb" stroke-width="5"/>
                                <path d="M440 775H1060V805H440z" fill="#e8e8e8"/><path d="M440 790H1180" stroke="#555" stroke-width="7"/>
                                <path d="M470 805H1200V852H480z" fill="#dfdfe2"/>
                                <path d="M470 812H1200M475 850H1200" stroke="#333" stroke-width="4"/>
                                <path d="M470 832H1200" stroke="#444" stroke-width="13"/>
                                <use href="#i-carriage" x="572" y="552" width="150" height="230"/>
                                <use href="#i-carriage" x="862" y="552" width="150" height="230"/>
                                <path d="M618 682 700 672 690 655 720 652 735 680V715H650L618 705z" fill="#3464dc"/>
                                <path d="M700 680 738 690 725 718H700z" fill="#16286c"/>
                                <use href="#i-lowmotor" x="480" y="450" width="130" height="200"/>
                                <use href="#i-lowmotor" x="768" y="450" width="130" height="200"/>

                                <!-- cable box -->
                                <path d="M655 866H768L775 890H828L835 872H930L935 855H965L985 895 960 930 940 950H870L830 962 805 958 770 915H685z" fill="#62625c"/>
                                <path d="M838 882H918L905 908H830z" fill="#f4f4f4"/>
                                <path d="M850 884 845 906M864 884 859 906M878 884 873 906M892 884 887 906" stroke="#999" stroke-width="2"/>
                                <path d="M682 890H760M690 908H765M952 905H970" stroke="#f0a070" stroke-width="11" stroke-dasharray="8 9"/>
                                <path d="M855 958 865 1002" stroke="#bbb" stroke-width="28"/>
                                <path d="M840 968 872 962M844 982 876 976M848 996 880 990" stroke="#444" stroke-width="5"/>

                                <!-- right column -->
                                <path d="M1045 715H1095L1118 740V790L1060 780V755H1045z" fill="#ddd"/>
                                <path d="M1095 725 1118 740V800L1090 790z" fill="#333"/><circle cx="1078" cy="775" r="11" fill="#a87830"/>
                                <path d="M1110 786H1195L1208 845H1140z" fill="#ddd"/><path d="M1125 800H1195M1140 830H1205" stroke="#444" stroke-width="6"/>
                                <path d="M1284 780 1310 778 1312 835 1275 950 1240 860z" fill="#c9c9d4"/>
                                <path d="M1065 645 1125 645 1272 970 1265 980H1202z" fill="#48484a"/>
                                <path d="M1140 850 1218 850 1272 970 1265 980H1202z" fill="#38383a"/>
                                <path d="M1072 622H1130L1136 650H1062z" fill="#707072"/>
                                <path d="M1310 840 1278 970H1200" fill="none" stroke="#ddd" stroke-width="5"/>

                                <!-- bracket and gear motor -->
                                <path d="M1175 696H1500V775H1208z" fill="#66643a"/>
                                <path d="M1170 694H1520V706H1178z" fill="#f5f2a6"/>
                                <path d="M1345 780H1380V830L1360 860z" fill="#cfe6f4"/>
                                <path d="M1375 770H1400L1395 825H1372z" fill="#999"/>
                                <path d="M1460 690 1480 668H1510L1520 690 1520 705H1460z" fill="#c9c9c9"/>
                                <path d="M1480 668H1510V685H1480z" fill="#888"/>
                                <path d="M1360 706H1525L1535 730 1560 780 1545 828H1510L1500 770 1345 765z" fill="#2b2b2b"/>
                                <path d="M1360 706H1525L1515 762H1345z" fill="#a2a2a4"/>
                                <path d="M1530 720 1540 760M1520 790 1540 815" stroke="#ccc" stroke-width="6"/>
                                <path d="M1500 870 1520 885 1535 930 1520 960 1530 990 1515 1035 1505 1043H1460L1435 1025z" fill="#14235e"/>
                                <path d="M1490 900 1505 880 1485 950 1470 960z" fill="#3a6cf0"/>
                                <path d="M1418 780Q1460 765 1500 785L1508 850 1480 910 1385 880z" fill="#8c0000"/>
                                <path d="M1400 797H1490L1480 860H1380z" fill="#dd1414"/>
                                <path d="M1425 790H1440M1468 790H1482" stroke="#fff" stroke-width="10"/><path d="M1428 806H1455" stroke="#6b7cf0" stroke-width="6"/>
                                <path d="M1385 855 1480 880 1487 920 1452 1020 1410 1030 1352 990 1370 910z" fill="url(#redm)"/>
                                <path d="M1352 965Q1400 950 1457 985L1452 1015Q1410 1045 1375 1015 1350 990 1352 965z" fill="#7a0404"/>
                                <path d="M1325 895H1362L1355 948H1313z" fill="#dc1818"/><path d="M1362 895 1370 905 1355 985 1315 955 1355 948z" fill="#8a0000"/>
                                <path d="M1380 860 1395 850V880H1378z" fill="#4a7cf4"/>

                                <!-- left bench -->
                                <path d="M50 738H385V775H55z" fill="#ffae45"/><path d="M52 768H385V778H56z" fill="#aa7020"/>
                                <path d="M58 778H400V796H65z" fill="#c4c4c8"/><path d="M60 786H400" stroke="#444" stroke-width="4"/>
                                <path d="M272 726H370V740H268z" fill="#ccc"/>
                                <path d="M105 700H278L262 740H102z" fill="#f23028"/><path d="M272 700 285 672 280 715 262 740z" fill="#a00"/>
                                <path d="M108 696H272" stroke="#ddd" stroke-width="6"/>
                                <path d="M75 796H105L60 905H38z" fill="#eee" stroke="#aaa" stroke-width="2"/>
                                <path d="M100 796H135L95 905H70z" fill="#444"/><path d="M135 796H180L150 905H108z" fill="#c9c9d4"/>
                                <path d="M110 796 80 905" stroke="#eee" stroke-width="7"/>
                                <path d="M35 905H300V970L290 975H50L33 930z" fill="#dcdce0"/>
                                <path d="M38 915H300M36 934H300M45 958H300" stroke="#444" stroke-width="4"/><path d="M42 952H300V972H50z" fill="#47474a"/>
                                <path d="M55 978H120" stroke="#111" stroke-width="6"/>

                                <!-- head plate -->
                                <path d="M70 505 125 515 130 540 90 540z" fill="#d8dce8"/>
                                <path d="M75 530H130L160 590 58 595z" fill="#f8f410"/><path d="M58 593H160V602H58z" fill="#8a8600"/>
                                <path d="M68 602H130L122 632H95z" fill="#003800"/>
                                <path d="M95 632 130 620 165 640 155 685 135 695 100 680z" fill="#0c4c10"/>
                                <path d="M160 600 200 670 190 678 150 610z" fill="#555"/><path d="M175 610 220 630 225 645H195z" fill="#000050"/>
                                <path d="M358 110 390 180 425 178V188L410 285 395 240 365 245 335 222z" fill="#4a4a4c"/>
                                <path d="M300 300 335 225 365 245 395 240 410 280 385 340H290z" fill="#fafaff"/>
                                <path d="M490 185 545 285 575 325V340H480L460 190z" fill="#454547"/>
                                <path d="M420 168H495L487 188H418z" fill="#a9a9b0"/>
                                <path d="M128 515H240L260 575 330 580 385 560 400 640 440 700 470 810 485 812 545 975H520L375 760 310 722 265 640 200 605 150 580z" fill="#48484a"/>
                                <path d="M212 108H358L362 118 242 515H85L38 450 68 350z" fill="#88ff88"/>
                                <path d="M358 110 362 122 246 518H90" fill="none" stroke="#146414" stroke-width="6"/>
                                <path d="M205 172H290L245 300M190 180 125 350 105 390H160L165 420M120 360 65 490H125" fill="none" stroke="#1c3cdc" stroke-width="4" stroke-dasharray="4 9"/>
                                <path d="M222 150 235 200M230 172 265 190M160 340 190 350M158 370V420" stroke="#1030e0" stroke-width="5" stroke-dasharray="5 6"/>
                                <path d="M135 512Q145 490 157 512M205 512Q215 490 226 512" fill="none" stroke="#146414" stroke-width="5"/>
                                <path d="M190 310 205 325 215 352H205L190 330z" fill="#555"/><path d="M105 330H165V350H150L130 335 110 350z" fill="#c9c9a0"/><circle cx="185" cy="338" r="12" fill="#2a90c0"/>
                                <ellipse cx="154" cy="268" rx="87" ry="68" transform="rotate(-14 154 268)" fill="#ffff14"/>
                                <path d="M70 290Q85 345 160 338 235 315 240 255" fill="none" stroke="#8a8600" stroke-width="4"/>
                                <path d="M110 245 170 230 182 275 150 290 125 283z" fill="#0c1a34"/>
                                <path d="M92 235 155 240 168 222 170 235 158 252H100z" fill="#999"/>
                                <path d="M60 160H110L128 130 168 205 155 238 90 236z" fill="#00003c"/>
                                <path d="M50 150 58 120 75 106 115 104 130 132 112 160 62 163z" fill="url(#bluem)"/>
                                <path d="M190 225 215 270M205 245 180 320" stroke="#1030e0" stroke-width="6" stroke-dasharray="6 8"/>

                                <!-- knife roller -->
                                <path d="M440 290 460 300 385 560 365 560z" fill="#7cf07c"/>
                                <path d="M415 290 455 255 440 320 410 335z" fill="#b8d4e8"/>
                                <path d="M468 290 400 570" stroke="#22343a" stroke-width="32"/>
                                <path d="M436 330 376 545" stroke="#c08820" stroke-width="8" stroke-dasharray="8 18"/>
                                <path d="M450 320 485 330M442 350 477 360M434 380 469 390M427 410 462 420M420 440 454 450M412 470 446 480M404 500 438 510M396 530 430 540" stroke="#5f7c84" stroke-width="3"/>
                                <path d="M478 255 466 300M398 560 390 600" stroke="#eee" stroke-width="16"/>
                                <path d="M446 170 332 550" stroke="#999" stroke-width="13"/><path d="M446 170 332 550" stroke="#fff" stroke-width="8"/>
                                <path d="M458 215 490 212 507 255 485 275 475 240 458 238z" fill="#b85c18"/><path d="M475 238H495V262H475z" fill="#f08020"/>
                                <circle cx="480" cy="265" r="12" fill="none" stroke="#ccc" stroke-width="6"/>
                                <path d="M265 572 300 550 365 562V574z" fill="#b4b4ba"/><path d="M278 560 300 552V560z" fill="#d22"/>
                                <path d="M332 605 370 612 385 630 365 650 335 640z" fill="#a05a18"/><circle cx="362" cy="632" r="10" fill="#1a1a1a"/><circle cx="378" cy="658" r="9" fill="#e6e6e6"/>
                                <path d="M330 575 350 615M345 575 360 610" stroke="#eee" stroke-width="6"/>
                                <path d="M395 118 455 168M278 495 340 550" stroke="#a87418" stroke-width="12" stroke-linecap="round"/>
                                <path d="M438 175Q450 150 465 172zM320 558Q335 532 348 556z" fill="#c08820"/>
                                <circle cx="393" cy="116" r="11" fill="#4c4c50"/><circle cx="276" cy="493" r="11" fill="#4c4c50"/>

                                <!-- corner plate -->
                                <path d="M370 696H440L432 730H362z" fill="#b9b9c0"/><path d="M440 696 446 712 436 735 432 730z" fill="#333"/>
                                <path d="M440 735H485V800H450z" fill="#ddd"/><ellipse cx="474" cy="776" rx="17" ry="12" fill="#a87830"/>
                                <path d="M398 815H468L545 978H300L284 938z" fill="#1f1f23"/>
                                <path d="M470 822 550 950 545 978z" fill="#424246"/>
                                <path d="M530 850 520 900 550 960" fill="none" stroke="#ccc" stroke-width="8" stroke-dasharray="5 5"/>
                                <path d="M432 925 470 920 495 935 505 970 490 988 450 980 430 955z" fill="#d49a3a"/>
                                <path d="M435 922H490L498 935H432z" fill="#f4f4f4"/>
                                <circle cx="465" cy="973" r="16" fill="#fff" stroke="#c8b060" stroke-width="9"/>
                                <g fill="#ddd"><circle cx="423" cy="828" r="3"/><circle cx="455" cy="828" r="3"/><circle cx="303" cy="947" r="3"/><circle cx="314" cy="970" r="3"/><circle cx="408" cy="947" r="3"/><circle cx="418" cy="970" r="3"/><circle cx="458" cy="898" r="3"/><circle cx="488" cy="900" r="3"/></g>
                            </g>
                            <!-- axes -->
                            <path d="M50 675 41 656" stroke="#0a7a1a" stroke-width="2"/>
                            <path d="M50 675H84" stroke="#f03030"/>
                            <path d="M50 675 43 700" stroke="#3030f0"/>
                            <circle cx="41" cy="656" r="5" fill="#0a6a14"/>
                            <g class="axis"><text x="38" y="647">Y</text><text x="87" y="672">X</text><text x="38" y="711">Z</text></g>
                        </svg>
                    </div>
                </div>
            </div>
        </section>
    </main>
</div>
<script src="tree.js"></script>
</body>
</html>
```

FILE: styles.css
```css
* {
    box-sizing: border-box;
    margin: 0;
    padding: 0;
}

body {
    display: flex;
    flex-direction: column;
    height: 100vh;
    overflow: hidden;
    border-bottom: 1px solid #0c1c28;
    font-family: "Liberation Sans", Arial, sans-serif;
    font-size: 11px;
    line-height: 14px;
    color: #333;
    background: #fff;
}

ul {
    list-style: none;
}

svg {
    display: block;
    flex: none;
}

button,
input,
select {
    font: inherit;
    color: inherit;
    border: 0;
    background: none;
}

.sprite {
    position: absolute;
    width: 0;
    height: 0;
}

.push {
    margin-left: auto;
}

.caret {
    border: 3px solid transparent;
    border-top-color: #000;
    border-bottom: 0;
}

/* top */
.top {
    display: flex;
    flex: none;
    height: 41px;
    padding: 0 6px 0 9px;
}

.logo {
    width: 26px;
    height: 30px;
    margin-top: 5px;
}

.brand {
    margin: 5px 23px 0 11px;
    font: 300 22px/28px "Open Sans", sans-serif;
    color: #2f3b3b;
}

.brand sup {
    font-size: 8px;
    line-height: 8px;
    vertical-align: 10px;
}

.user {
    margin-top: 16px;
}

.top-tools {
    display: flex;
    align-items: flex-start;
    margin: 10px 0 0 auto;
}

.combo {
    display: flex;
    height: 20px;
    border: 1px solid #888;
    font-size: 12px;
}

.combo-type {
    width: 171px;
    margin-right: 10px;
}

.combo-search {
    width: 194px;
    margin-right: 16px;
}

.combo select,
.combo input {
    flex: 1;
    min-width: 0;
    padding: 0 3px;
    appearance: none;
    outline: 0;
}

::placeholder {
    color: #777;
    opacity: 1;
}

.trigger,
.mag {
    display: flex;
    align-items: center;
    justify-content: center;
    width: 17px;
}

.trigger {
    background: linear-gradient(#ffe3b0, #ffb85c 60%, #ffd594);
}

.mag {
    border-left: 1px solid #888;
    background: #e2e2e2;
}

.btn {
    display: flex;
    align-items: center;
    gap: 5px;
    height: 18px;
    padding: 0 4px;
    border: 1px solid #999;
    border-radius: 3px;
    background: linear-gradient(#fff, #e2e2e2);
    box-shadow: inset 0 0 0 1px #fff;
}

/* left rail */
.frame {
    display: flex;
    flex: 1;
    min-height: 0;
}

.rail {
    display: flex;
    flex-direction: column;
    align-items: center;
    width: 32px;
    padding: 11px 0 20px;
    border-right: 2px solid #5ab93c;
    background: #3d4747;
}

.rail-btn {
    margin-bottom: 14px;
}

.rail-link {
    writing-mode: vertical-rl;
    font: bold 13px/16px "Noto Sans", sans-serif;
    color: #fff;
    text-decoration: none;
}

.rail-end {
    margin-top: auto;
}

.main {
    display: flex;
    flex-direction: column;
    flex: 1;
    min-width: 0;
    padding: 0 6px 0 9px;
    background: #c8c8c6;
}

.crumbs {
    display: flex;
    align-items: center;
    gap: 3px;
    height: 37px;
    flex: none;
    padding-top: 1px;
    font-size: 12px;
}

.crumbs a {
    color: #1a4a80;
    text-decoration: none;
}

.crumbs .btn {
    font-size: 11px;
}

.home {
    margin: 0 11px 0 3px;
}

.card {
    display: flex;
    flex-direction: column;
    flex: 1;
    min-height: 0;
    background: #fff;
    box-shadow: 0 0 4px 1px #777;
}

.title {
    display: flex;
    align-items: center;
    gap: 6px;
    height: 38px;
    flex: none;
    padding: 0 11px 0 9px;
}

.title h1 {
    margin-left: -2px;
    font-size: 16px;
    font-weight: normal;
    color: #444;
}

.btn-cab {
    padding: 3px;
    border: 1px solid #7a5a1e;
    border-radius: 3px;
    background: linear-gradient(#ffd27a, #f0a93c);
}

.state {
    margin-right: 2px;
    font-size: 12px;
}

/* tabs */
.tabbar {
    height: 26px;
    flex: none;
    padding-left: 7px;
    border-bottom: 2px solid #d2d2d2;
}

.tabs {
    display: inline-flex;
    gap: 2px;
    height: 26px;
    padding: 1px 1px 2px;
    background: #d2d2d2;
}

.tabs a {
    display: flex;
    align-items: center;
    height: 23px;
    padding: 0 10px 2px;
    font-size: 12px;
    font-weight: bold;
    color: #fff;
    text-decoration: none;
    background: #5ab53c;
}

.tabs .on a {
    height: 25px;
    padding-bottom: 4px;
    color: #333;
    background: #fff;
}

.tabs .off a {
    gap: 8px;
    background: #c6c6c4;
}

/* ribbon */
.ribbon {
    display: flex;
    gap: 2px;
    height: 70px;
    flex: none;
    margin-top: 2px;
    padding: 3px 3px 0;
    border-top: 1px solid #b4b4b4;
    border-bottom: 1px solid #b4b4b4;
    background: #f0f0f0;
}

.group {
    padding: 1px 1px 0;
    border: 1px solid #c4c4c4;
    border-bottom: 0;
    border-radius: 3px 3px 0 0;
}

.group h2 {
    height: 16px;
    font-size: 11px;
    line-height: 14px;
    text-align: center;
    background: #dedede;
}

.rg {
    display: flex;
    height: 48px;
}

.rg > .caret {
    margin: 22px 5px 0 1px;
}

.small {
    display: flex;
    align-items: center;
    gap: 5px;
    height: 22px;
    white-space: nowrap;
}

.far {
    margin-left: 4px;
}

.big {
    display: flex;
    flex-direction: column;
    align-items: center;
    gap: 2px;
    padding: 3px 4px 0;
    white-space: nowrap;
}

.rg-view {
    display: grid;
    grid-template-columns: 90px 86px;
    align-content: center;
    padding: 0 0 2px 4px;
}

.rg-add {
    padding-left: 3px;
}

.rg-filter {
    gap: 5px;
    padding: 0 4px 0 3px;
}

.rg-filter .stack {
    padding-top: 1px;
}

.rg-extra {
    gap: 4px;
    padding-left: 3px;
}

.rg-report {
    gap: 1px;
    padding-left: 3px;
}

/* search in structure */
.findbar {
    display: flex;
    align-items: center;
    gap: 11px;
    height: 28px;
    flex: none;
    margin: 8px 0 5px;
    padding: 0 4px 0 2px;
    border-top: 1px solid #b4b4b4;
    border-bottom: 1px solid #b4b4b4;
    background: #f0f0f0;
}

.find {
    display: flex;
    width: 192px;
    height: 20px;
    margin-right: -4px;
    border: 1px solid #888;
    border-radius: 0 3px 3px 0;
}

.find input {
    flex: 1;
    min-width: 0;
    padding: 0 3px;
    background: #fff;
}

.find button {
    padding: 0 1px;
    border-left: 1px solid #888;
}

/* panes */
.split {
    display: grid;
    grid-template-columns: 574px minmax(0, 1fr);
    gap: 5px;
    flex: 1;
    min-height: 0;
    padding: 0 5px 6px;
}

.pane {
    display: flex;
    flex-direction: column;
    min-height: 0;
    border: 1px solid #d0d0d0;
}

.grid {
    flex: 1;
    min-height: 0;
    overflow: hidden;
}

table {
    width: 100%;
    table-layout: fixed;
    border-collapse: separate;
    border-spacing: 0;
}

.c-name { width: 185px; }
.c-info { width: 31px; }
.c-ben { width: 61px; }
.c-ver { width: 103px; }
.c-lc { width: 62px; }
.c-life { width: 61px; }

th,
td {
    overflow: hidden;
    padding: 0 0 0 5px;
    font-weight: normal;
    text-align: left;
    white-space: nowrap;
}

th {
    height: 20px;
    border-right: 1px solid #c4c4c4;
    border-bottom: 2px solid #999;
}

th:last-child {
    border-right: 0;
}

td {
    height: 23px;
    border-bottom: 1px solid #ececec;
    color: #444;
}

.sel td {
    border-color: #dff2d8;
    background: #dff2d8;
}

.node {
    display: flex;
    align-items: center;
    gap: 3px;
    overflow: hidden;
    margin-right: 3px;
    color: #000;
}

td.name {
    padding: 1px 0 0;
}

td.info {
    padding-left: 4px;
}

.lv1 { padding-left: 18px; }
.lv2 { padding-left: 36px; }

.toggle {
    flex: none;
    width: 15px;
    padding-left: 6px;
}

.lights {
    display: flex;
    gap: 3px;
    padding-bottom: 1px;
}

.lights i {
    width: 12px;
    height: 12px;
    border: 1px solid #ddd;
    border-radius: 50%;
}

.lights .g { background: #e0ffdc; }
.lights .y { background: #fff9d0; }
.lights .r { background: #ffd2d2; }
.lights .lit { border-color: #444; }
.lights .g.lit { background: #66f95a; }
.lights .y.lit { background: #ffe926; }
.lights .r.lit { background: #ff2a2a; }

.hscroll {
    display: flex;
    align-items: center;
    height: 17px;
    flex: none;
    padding: 0 16px;
    background: #f0f0f0;
}

.track {
    flex: 1;
    padding: 0 67px 0 9px;
}

.thumb {
    height: 15px;
    background: #cdcdcd;
}

.count {
    height: 22px;
    flex: none;
    padding-left: 2px;
    border-top: 1px solid #d0d0d0;
    line-height: 21px;
    background: #f6f6f6;
}

.inner {
    padding-left: 7px;
}

.viewer {
    display: flex;
    flex-direction: column;
    flex: 1;
    min-height: 0;
    margin: 2px 0 0 8px;
}

.viewbar {
    display: flex;
    align-items: center;
    gap: 6px;
    height: 28px;
    flex: none;
    padding-left: 5px;
    border-top: 1px solid #b4b4b4;
    border-bottom: 1px solid #b4b4b4;
    background: #f0f0f0;
}

.viewbar button {
    display: flex;
    align-items: center;
    gap: 2px;
}

.model {
    flex: 1;
    width: 100%;
    min-height: 0;
}

.axis {
    font: 12px "DejaVu Sans", sans-serif;
    fill: #000;
}
```

FILE: tree.js
```js
// level, icon, open/closed, name, Benennung, version, lit lamp, component
var data = [
  [0, 'asm', 'open', '100_111_folienschnittmaschine.asm', 'Foliensc…', 'A.4', 'y', ''],
  [1, 'asm', 'closed', '900_001_gestell.asm', 'Gestell', 'A.2', 'y', 5],
  [1, 'asm', 'closed', '200_001_gestell.asm', 'Gestell', 'A.2', 'g', 6],
  [1, 'asm', 'open', '300_001_zahnriemenachse.asm', 'Zahnrie…', 'A.2', 'y', 7],
  [2, 'prt', '', '300_004_profil.prt', 'Profil', 'A.2', 'g', 5],
  [2, 'prt', '', '300_002_deckel_elgr55', 'Deckel', 'A.2', 'g', 6],
  [2, 'prt', '', '300_303_distanz_av_e', 'Distanz', 'A.2', 'r', 7],
  [2, 'fam', '', '300_335_welle_900.prt', 'Welle', 'A.2', 'g', 8],
  [2, 'fam', '', '300_335_welle_900.prt', 'Welle', 'A.2', 'g', 9],
  [2, 'prt', '', '300_004_profil.prt', 'Profil', 'A.2', 'g', 10],
  [2, 'prt', '', '300_002_deckel_elgr55', 'Deckel', 'A.2', 'g', 11],
  [2, 'prt', '', '300_303_distanz_av_e', 'Distanz', 'A.2', 'r', 12],
  [2, 'prt', '', '300_400_riemen_elgr55', 'Riemen', 'A.2', 'g', 14],
  [2, 'prt', '', '300_344_profil_elgr55', '', 'A.2', 'g', 15],
  [2, 'prt', '', '300_344_profil_elgr55', '', 'A.2', 'g', 16],
  [2, 'prt', '', '9000_motor_msia_42c', 'Motor', 'A.2', 'g', 17],
  [1, 'asm', 'closed', '300_001_zahnriemenachse', 'Zahnrie…', 'A.2', 'y', 8],
  [1, 'asm', 'closed', '300_300_zahnriemenachse', 'Zahnrie…', 'A.2', 'g', 9],
  [1, 'asm', 'closed', '300_300_zahnriemenachse', 'Zahnrie…', 'A.2', 'g', 10],
  [1, 'asm', 'closed', '400_001_aufnahme.asm', 'Aufnahme', 'A.2', 'g', 11],
  [1, 'asm', 'closed', '400_001_aufnahme.asm', 'Aufnahme', 'A.2', 'g', 12],
  [1, 'asm', 'closed', '400_200_aufnahme.asm', 'Aufnahme', 'A.2', 'g', 13],
  [1, 'asm', 'closed', '400_200_aufnahme.asm', 'Aufnahme', 'A.2', 'g', 14],
  [1, 'asm', 'closed', '500_100_schnitteinheit.as', 'Schnittei…', 'A.3', 'g', 15],
  [1, 'asm', 'closed', '600_001_folienfuehrung.a', 'Folienfü…', 'A.3', 'g', 16],
  [1, 'asm', 'closed', '700_001_pneumatikeinhe', 'Pneuma…', 'A.2', 'g', 17],
  [1, 'asm', 'closed', '700_700_notausschalter.a', 'Notauss…', 'A.2', 'g', 18],
  [1, 'asm', 'closed', '200_200_traeger.asm', 'Träger', 'A.2', 'g', 19],
  [1, 'bulk', 'closed', '0000012052.asm', '', 'A.1', 'y', 20]
];
var states = {g: 'Freigeg…', y: 'Wird be…', r: 'Veraltet'};
var arrows = {
  open: '<path d="M1 8.500 7 2.500V8.500z" fill="#333"/>',
  closed: '<path d="M1.500 1.500V8.500L6 5z" fill="#fff" stroke="#888"/>',
  '': ''
};

var html = '';
for (var i = 0; i < data.length; i++) {
  var d = data[i];
  var lamps = '';
  ['g', 'y', 'r'].forEach(function (c) {
    lamps += '<i class="' + c + (c === d[6] ? ' lit' : '') + '"></i>';
  });
  html += '<tr' + (i === 0 ? ' class="sel"' : '') + '>' +
    '<td class="name"><div class="node lv' + d[0] + '">' +
    '<span class="toggle"><svg width="8" height="10" viewBox="0 0 8 10">' + arrows[d[2]] + '</svg></span>' +
    '<svg width="16" height="16"><use href="#i-' + d[1] + '"/></svg><span>' + d[3] + '</span></div></td>' +
    '<td class="info"><svg width="16" height="16"><use href="#i-info"/></svg></td>' +
    '<td>' + d[4] + '</td><td>' + d[5] + '</td>' +
    '<td><div class="lights">' + lamps + '</div></td>' +
    '<td>' + states[d[6]] + '</td><td>' + d[7] + '</td></tr>';
}
document.getElementById('rows').innerHTML = html;
```
